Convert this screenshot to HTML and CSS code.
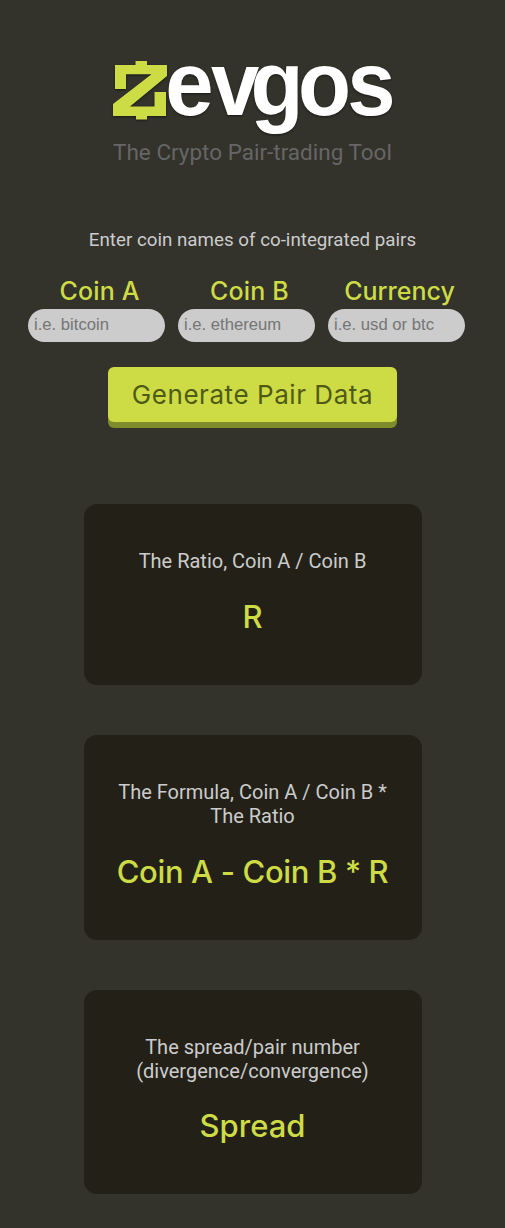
FILE: index.html
```html
<!DOCTYPE html>
<html lang="en">
<head>
<meta charset="utf-8">
<title>Zevgos</title>
<link rel="stylesheet" href="styles.css">
</head>
<body>
<header class="header">
  <svg class="logo" viewBox="0 -35 290 125" role="img" aria-label="zevgos">
    <path class="logo-z" d="M7 10H27.500V6H39V10H59V21L22 51.500H46.500V37H58V61H39V64.500H28V61H5V49L43.500 19.300H18V34H7Z"/>
    <text class="logo-text" x="59.300 106.700 147.800 196.900 248" y="60" transform="scale(.965 1)">evgos</text>
  </svg>
  <p class="tagline">The Crypto Pair-trading Tool</p>
</header>
<main>
  <p class="intro">Enter coin names of co-integrated pairs</p>
  <form class="form">
    <div class="fields">
      <label class="field"><span class="label">Coin A</span><input class="input" placeholder="i.e. bitcoin"></label>
      <label class="field"><span class="label">Coin B</span><input class="input" placeholder="i.e. ethereum"></label>
      <label class="field"><span class="label label-currency">Currency</span><input class="input" placeholder="i.e. usd or btc"></label>
    </div>
    <button class="button" type="button">Generate Pair Data</button>
  </form>
  <section class="cards">
    <article class="card card-ratio"><p class="desc">The Ratio, Coin A / Coin B</p><h2 class="value">R</h2></article>
    <article class="card"><p class="desc">The Formula, Coin A / Coin B * The Ratio</p><h2 class="value value-formula">Coin A - Coin B * R</h2></article>
    <article class="card card-spread"><p class="desc">The spread/pair number (divergence/convergence)</p><h2 class="value">Spread</h2></article>
  </section>
</main>
</body>
</html>
```
FILE: styles.css
```css
* { box-sizing: border-box; }
body {
  margin: 0;
  height: 1228px;
  overflow: hidden;
  background: #33322b;
  color: #ccc;
  font-family: Roboto, sans-serif;
  text-align: center;
}
p, h2 { margin: 0; }
.header { padding-top: 20px; display: flex; flex-direction: column; align-items: center; }
.logo { width: 290px; height: 125px; display: block; filter: drop-shadow(0 1px 1px rgba(0, 0, 0, .5)); }
.logo-z { fill: #cddc45; }
.logo-text { fill: #fff; font: bold 90px "Liberation Sans", sans-serif; }
.tagline { margin-top: -8px; font-size: 22.5px; line-height: 30px; color: #666; }
.intro { margin-top: 60px; font-size: 18.75px; line-height: 26px; }
.form { display: flex; flex-direction: column; align-items: center; }
.fields { display: flex; gap: 13px; margin: 21px 12px 0 0; }
.field { width: 137px; display: flex; flex-direction: column; align-items: center; }
.label, .value, .button { font-family: Inter, sans-serif; font-weight: 500; }
.label { padding: 0 0 1px 6px; font-size: 25px; line-height: 34px; letter-spacing: .15px; color: #cddc45; white-space: nowrap; }
.label-currency { letter-spacing: 0; }
.input {
  width: 137px; height: 33px; padding: 0 6px 2px;
  border: 0; border-radius: 17px; background: #ccc;
  font: 16.67px "Liberation Sans", Arial, sans-serif;
}
.input::placeholder { color: #757575; }
.button {
  width: 289px; height: 55px; margin-top: 25px; padding: 0;
  border: 0; border-radius: 6px; background: #cddc45;
  box-shadow: 0 6px #7f8c2c; color: #4f5a14; font-size: 26px; font-weight: 400; letter-spacing: .55px;
}
.cards { margin-top: 82px; display: flex; flex-direction: column; align-items: center; gap: 50px; }
.card { width: 338px; height: 205px; padding: 45px 32px 0; border-radius: 13px; background: #232117; }
.card-ratio { height: 181px; }
.card-spread { height: 204px; }
.desc { font-size: 20px; line-height: 24px; }
.value { margin-top: 24px; font-size: 31px; line-height: 39px; color: #cddc45; white-space: nowrap; }
.value-formula { letter-spacing: -.35px; }
.card-spread .value { margin-top: 23px; }
```
